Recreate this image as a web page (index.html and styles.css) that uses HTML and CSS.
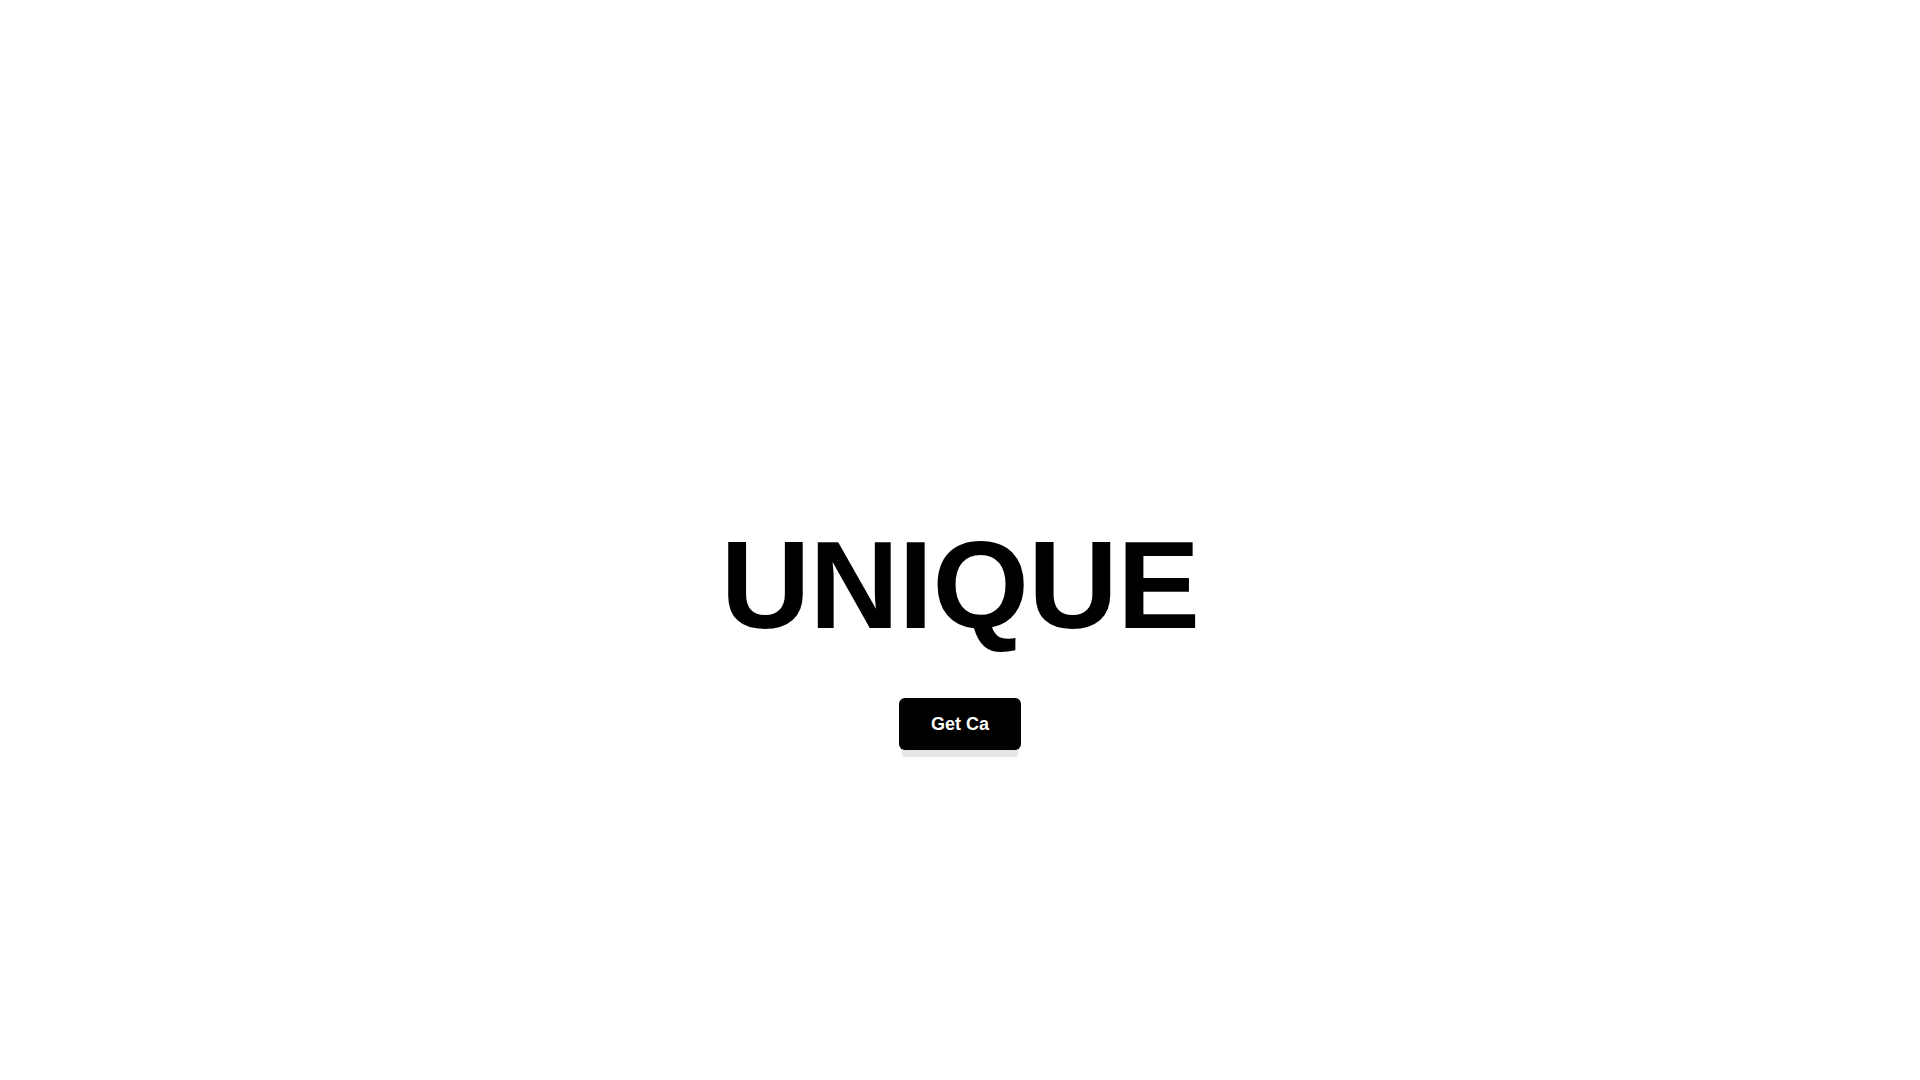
FILE: index.html
```html
<!DOCTYPE html>
<html lang="en">
<head>
<meta charset="utf-8">
<title>UNIQUE</title>
<link rel="stylesheet" href="styles.css">
</head>
<body>
<main class="hero">
  <h1 class="hero-title">UNIQUE</h1>
  <button class="cta" type="button">Get Ca</button>
</main>
</body>
</html>
```

FILE: styles.css
```css
html, body {
  margin: 0;
  padding: 0;
  background: #ffffff;
}
body {
  font-family: "Liberation Sans", Arial, sans-serif;
  color: #000000;
}
.hero {
  box-sizing: border-box;
  min-height: 100vh;
  padding-top: 192.5px;
  display: flex;
  flex-direction: column;
  align-items: center;
  justify-content: center;
}
.hero-title {
  margin: 0;
  font-size: 124px;
  line-height: 1;
  font-weight: 700;
  letter-spacing: -0.6px;
}
.cta {
  margin-top: 50.5px;
  padding: 16px 32px;
  font-family: "Liberation Sans", Arial, sans-serif;
  font-size: 18px;
  line-height: 20px;
  font-weight: 700;
  color: #ffffff;
  background: #000000;
  border: none;
  border-radius: 6px;
  box-shadow: 0 10px 0 -3px #e6e6e6;
  cursor: pointer;
}
```
